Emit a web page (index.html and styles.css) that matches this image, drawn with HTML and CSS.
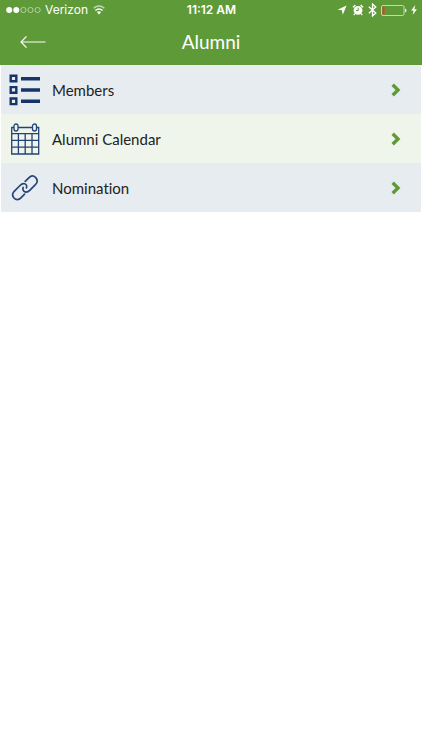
FILE: index.html
```html
<!DOCTYPE html>
<html lang="en">
<head>
<meta charset="utf-8">
<meta name="viewport" content="width=device-width, initial-scale=1">
<title>Alumni</title>
<link rel="stylesheet" href="styles.css">
</head>
<body>
<header class="top">
  <div class="status">
    <div class="status-side">
      <svg class="signal" width="35" height="8" viewBox="0 0 35 8" fill="none" stroke="#fff" stroke-width="0.7" aria-hidden="true">
        <circle cx="3.2" cy="4" r="2.7" fill="#fff"/><circle cx="10.3" cy="4" r="2.7" fill="#fff"/>
        <g opacity=".75"><circle cx="17.4" cy="4" r="2.6"/><circle cx="24.5" cy="4" r="2.6"/><circle cx="31.6" cy="4" r="2.6"/></g>
      </svg>
      <span class="carrier">Verizon</span>
      <svg class="wifi" width="12" height="10" viewBox="0 0 12 10" fill="none" stroke="#fff" stroke-width="1.4" aria-hidden="true">
        <path d="M.6 3.3Q6-1.3 11.4 3.3" opacity=".6"/><path d="M2.4 5.5Q6 2.4 9.6 5.5"/><path d="M3.9 7.1Q6 5.3 8.1 7.1L6 9.4Z" fill="#fff" stroke="none"/>
      </svg>
    </div>
    <time class="clock">11:12 AM</time>
    <div class="status-side status-end">
      <svg width="11" height="10" viewBox="0 0 11 10" fill="#fff" aria-hidden="true"><path d="M9.6.4 5.8 9.7 4.9 5.2.5 4.7Z"/></svg>
      <svg width="12" height="12" viewBox="0 0 12 12" aria-hidden="true"><circle cx="6" cy="6.3" r="4.4" fill="#fff"/><path d="M.9 3.3 3.4 1M11.1 3.3 8.6 1M2.8 9.7 1.8 11M9.2 9.7l1 1.3" stroke="#fff" stroke-width="1.3"/><path d="M6.2 3.6v3H4" fill="none" stroke="#5f9a38" stroke-width="1"/></svg>
      <svg width="9" height="14" viewBox="0 0 9 14" fill="none" stroke="#fff" stroke-width="1.3" aria-hidden="true"><path d="M.8 3.8 7.8 10 4.5 13V1L7.8 4 .8 10.2"/></svg>
      <svg width="26" height="11" viewBox="0 0 26 11" fill="none" aria-hidden="true"><rect x=".5" y=".5" width="22.5" height="10" rx="1.5" stroke="#c5d8b5"/><path d="M1.5 1.5h2v8h-2z" fill="#f03a24"/><path d="M24 3.5q1.5.3 1.5 2t-1.5 2z" fill="#e8f0e0"/></svg>
      <svg width="6" height="10" viewBox="0 0 6 10" fill="#fff" aria-hidden="true"><path d="M4.3 0 .1 5.6h2.5L1.6 10 5.9 4.2H3.4Z"/></svg>
    </div>
  </div>
  <div class="nav">
    <button class="back" type="button" aria-label="Back">
      <svg width="26" height="14" viewBox="0 0 26 14" fill="none" stroke="#fff" stroke-width="1.2" aria-hidden="true"><path d="M25.5 7H1M6.5 1.3 1 7l5.5 5.7"/></svg>
    </button>
    <h1 class="title">Alumni</h1>
  </div>
</header>
<main>
  <nav class="menu" aria-label="Alumni">
    <a class="row" href="#members">
      <svg class="icon" width="32" height="32" viewBox="0 0 32 32" fill="none" stroke="#173468" aria-hidden="true"><g stroke-width="2.4"><path d="M1.7 1.7h5.6v5.6H1.7zM1.7 13.1h5.6v5.6H1.7zM1.7 24.5h5.6v5.6H1.7z"/></g><path d="M12 4.8h19M12 16h19M12 27.3h19" stroke-width="3.6"/></svg>
      <span class="label">Members</span>
      <svg class="chevron" width="10" height="14" viewBox="0 0 10 14" aria-hidden="true"><path d="M1.7 1.7 7 7l-5.3 5.3"/></svg>
    </a>
    <a class="row" href="#calendar">
      <svg class="icon" width="32" height="32" viewBox="0 0 32 32" fill="none" stroke="#234478" stroke-width="1.3" aria-hidden="true"><path d="M5 4.5H2.7V31h27V4.5h-2.2M9 4.5h14.5M2.7 10.6h27M2.7 17.4h27M2.7 24.2h27M9.4 10.6V31M16.2 10.6V31M23 10.6V31"/><rect x="5" y="1" width="4" height="7" rx="2"/><rect x="23.5" y="1" width="4" height="7" rx="2"/></svg>
      <span class="label">Alumni Calendar</span>
      <svg class="chevron" width="10" height="14" viewBox="0 0 10 14" aria-hidden="true"><path d="M1.7 1.7 7 7l-5.3 5.3"/></svg>
    </a>
    <a class="row" href="#nomination">
      <svg class="icon" width="32" height="32" viewBox="0 0 32 32" fill="none" stroke="#28447a" stroke-width="1.7" stroke-linecap="round" aria-hidden="true"><path d="M17.4 15.8C18.4 13.6 17 12.2 15.6 11.8 13.9 11.3 12.3 12.2 11 13.5L5.2 19.3C3.3 21.4 3.2 24 5 26 7 28.2 9.8 28 11.9 25.9L15.6 22.2M14.2 15.4C13.2 17.6 14.6 19.4 16.2 19.9 17.8 20.4 19.4 19.7 20.7 18.4L26.4 12.7C28.6 10.5 28.7 7.8 26.7 5.6 24.6 3.5 21.9 3.7 19.8 5.8L16.2 9.4"/></svg>
      <span class="label">Nomination</span>
      <svg class="chevron" width="10" height="14" viewBox="0 0 10 14" aria-hidden="true"><path d="M1.7 1.7 7 7l-5.3 5.3"/></svg>
    </a>
  </nav>
</main>
</body>
</html>
```
FILE: styles.css
```css
* {
  box-sizing: border-box;
}

body {
  margin: 0;
  background: #fff;
  color: #222;
  font-family: Lato, "Liberation Sans", sans-serif;
  font-variant-ligatures: none;
}

svg {
  display: block;
  flex: none;
}

.top {
  background: #5f9a38;
  color: #fff;
}

.status {
  display: grid;
  grid-template-columns: 1fr auto 1fr;
  align-items: center;
  height: 20px;
  padding: 0 5px 0 6px;
  font: 12px/20px Inter, sans-serif;
}

.status-side {
  display: flex;
  align-items: center;
  gap: 4px;
}

.status-end {
  justify-content: flex-end;
}

.wifi {
  margin-left: 1px;
}

.clock {
  font-size: 12px;
  font-weight: 600;
}

.nav {
  display: grid;
  grid-template-columns: 1fr auto 1fr;
  align-items: center;
  height: 45px;
  padding-bottom: 2px;
}

.back {
  justify-self: start;
  margin: 0;
  padding: 8px 20px;
  border: 0;
  background: none;
}

.title {
  margin: 0;
  font-size: 19px;
  font-weight: 400;
  line-height: 24px;
}

.menu {
  padding-right: 1px;
  padding-left: 1px;
}

.row {
  display: flex;
  align-items: center;
  height: 49px;
  padding: 0 20px 0 8px;
  background: #e7ecf1;
  color: inherit;
  font-size: 15px;
  line-height: 20px;
  text-decoration: none;
}

.row:nth-child(even) {
  background: #eff5eb;
}

.label {
  flex: 1;
  margin-left: 11px;
}

.chevron {
  fill: none;
  stroke: #5f9a38;
  stroke-width: 3.4;
}
```
